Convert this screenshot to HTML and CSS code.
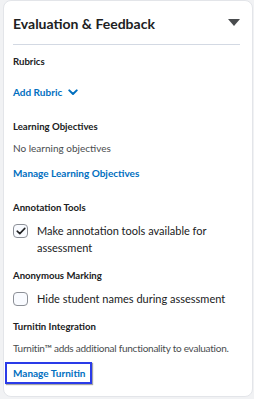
FILE: index.html
```html
<!DOCTYPE html>
<html lang="en">
<head>
    <meta charset="UTF-8">
    <meta name="viewport" content="width=device-width, initial-scale=1.0">
    <title>Evaluation &amp; Feedback</title>
    <link rel="stylesheet" href="styles.css">
</head>
<body>
    <div class="card">
        <div class="card-header">
            <h2>Evaluation &amp; Feedback</h2>
            <span class="caret"></span>
        </div>

        <div class="section first">
            <h3>Rubrics</h3>
            <a class="link" href="#">Add Rubric
                <svg class="chevron" width="10" height="7" viewBox="0 0 10 7"><path d="M1.3 1.4 L5 5 L8.7 1.4" fill="none" stroke="#006fbf" stroke-width="2" stroke-linecap="round" stroke-linejoin="round"/></svg>
            </a>
        </div>

        <div class="section">
            <h3>Learning Objectives</h3>
            <p class="text">No learning objectives</p>
            <a class="link" href="#">Manage Learning Objectives</a>
        </div>

        <div class="section">
            <h3>Annotation Tools</h3>
            <label class="check">
                <span class="box checked">
                    <svg width="10" height="8" viewBox="0 0 10 8"><path d="M1.2 4.2 L3.8 6.6 L8.8 1.4" fill="none" stroke="#202122" stroke-width="1.6" stroke-linecap="round" stroke-linejoin="round"/></svg>
                </span>
                <span>Make annotation tools available for assessment</span>
            </label>
        </div>

        <div class="section">
            <h3>Anonymous Marking</h3>
            <label class="check">
                <span class="box"></span>
                <span>Hide student names during assessment</span>
            </label>
        </div>

        <div class="section">
            <h3>Turnitin Integration</h3>
            <p class="text single">Turnitin™ adds additional functionality to evaluation.</p>
            <a class="link focused" href="#">Manage Turnitin</a>
        </div>
    </div>
</body>
</html>
```

FILE: styles.css
```css
body {
    margin: 0;
    background-color: #f1f2f4;
    font-family: Lato, "Open Sans", sans-serif;
    color: #202122;
}
.card {
    box-sizing: border-box;
    width: 250px;
    height: 397px;
    margin-left: 3px;
    padding: 0 12px 0 9px;
    background-color: #fff;
    border: 1px solid #e3e5e9;
    border-radius: 8px;
}
.card-header {
    display: flex;
    align-items: center;
    justify-content: space-between;
    height: 43px;
    border-bottom: 1px solid #d3d9e3;
}
h2 {
    margin: 0;
    font-size: 14px;
    font-weight: 700;
    padding-top: 1px;
}
.caret {
    width: 0;
    height: 0;
    border-left: 6.5px solid transparent;
    border-right: 6.5px solid transparent;
    border-top: 7px solid #494c4e;
}
.section {
    display: flex;
    flex-direction: column;
    align-items: flex-start;
    padding-top: 12px;
}
.section.first {
    padding-top: 9px;
}
h3 {
    margin: 0 0 5px;
    font-size: 9.6px;
    font-weight: 700;
    line-height: 16px;
}
.text {
    margin: 0 0 9px;
    font-size: 10px;
    line-height: 16px;
    color: #494c4e;
}
.single {
    margin-bottom: 6px;
    white-space: nowrap;
    letter-spacing: -0.25px;
}
.link {
    margin-bottom: 7px;
    font-size: 10px;
    font-weight: 700;
    line-height: 16px;
    color: #006fbf;
    text-decoration: none;
    display: inline-flex;
    align-items: center;
    gap: 6px;
}
h3 + .link {
    margin-top: 9px;
}
.chevron {
    margin-top: 1px;
}
.focused {
    margin: 0 0 0 -8px;
    padding: 1px 5px 1px 6px;
    border: 2px solid #2a3be8;
    box-shadow: 1px 1px 1px rgba(0, 0, 0, 0.35);
}
.check {
    display: flex;
    align-items: flex-start;
    gap: 9px;
    margin-top: 1px;
    font-size: 11px;
    line-height: 17px;
    color: #202122;
}
.box {
    flex: none;
    box-sizing: border-box;
    width: 15px;
    height: 14px;
    margin-top: 2px;
    border: 1px solid #8c9097;
    border-radius: 4px;
    background-color: #f9fbff;
    display: flex;
    align-items: center;
    justify-content: center;
}
```
